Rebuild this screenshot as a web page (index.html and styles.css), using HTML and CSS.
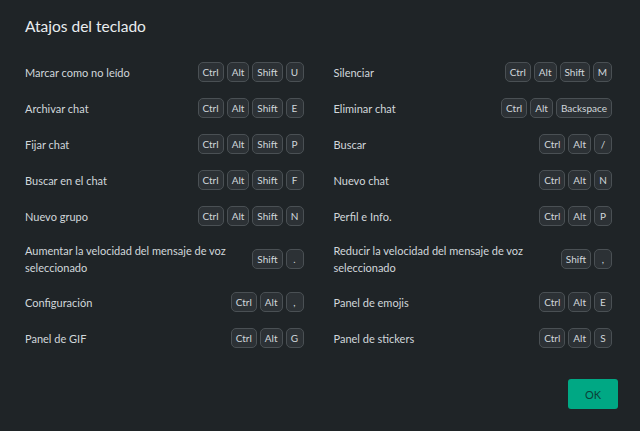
FILE: index.html
```html
<!DOCTYPE html>
<html lang="es">
<head>
  <meta charset="UTF-8">
  <meta name="viewport" content="width=device-width, initial-scale=1.0">
  <title>Atajos del teclado</title>
  <link rel="stylesheet" href="styles.css">
</head>
<body>

<div class="dialog">
  <h1 class="dialog-title">Atajos del teclado</h1>

  <div class="shortcuts">
    <div class="shortcut">
      <span class="label">Marcar como no leído</span>
      <span class="keys"><kbd>Ctrl</kbd><kbd>Alt</kbd><kbd>Shift</kbd><kbd>U</kbd></span>
    </div>
    <div class="shortcut">
      <span class="label">Silenciar</span>
      <span class="keys"><kbd>Ctrl</kbd><kbd>Alt</kbd><kbd>Shift</kbd><kbd>M</kbd></span>
    </div>
    <div class="shortcut">
      <span class="label">Archivar chat</span>
      <span class="keys"><kbd>Ctrl</kbd><kbd>Alt</kbd><kbd>Shift</kbd><kbd>E</kbd></span>
    </div>
    <div class="shortcut">
      <span class="label">Eliminar chat</span>
      <span class="keys"><kbd>Ctrl</kbd><kbd>Alt</kbd><kbd>Backspace</kbd></span>
    </div>
    <div class="shortcut">
      <span class="label">Fijar chat</span>
      <span class="keys"><kbd>Ctrl</kbd><kbd>Alt</kbd><kbd>Shift</kbd><kbd>P</kbd></span>
    </div>
    <div class="shortcut">
      <span class="label">Buscar</span>
      <span class="keys"><kbd>Ctrl</kbd><kbd>Alt</kbd><kbd>/</kbd></span>
    </div>
    <div class="shortcut">
      <span class="label">Buscar en el chat</span>
      <span class="keys"><kbd>Ctrl</kbd><kbd>Alt</kbd><kbd>Shift</kbd><kbd>F</kbd></span>
    </div>
    <div class="shortcut">
      <span class="label">Nuevo chat</span>
      <span class="keys"><kbd>Ctrl</kbd><kbd>Alt</kbd><kbd>N</kbd></span>
    </div>
    <div class="shortcut">
      <span class="label">Nuevo grupo</span>
      <span class="keys"><kbd>Ctrl</kbd><kbd>Alt</kbd><kbd>Shift</kbd><kbd>N</kbd></span>
    </div>
    <div class="shortcut">
      <span class="label">Perfil e Info.</span>
      <span class="keys"><kbd>Ctrl</kbd><kbd>Alt</kbd><kbd>P</kbd></span>
    </div>
    <div class="shortcut">
      <span class="label">Aumentar la velocidad del mensaje de voz seleccionado</span>
      <span class="keys"><kbd>Shift</kbd><kbd>.</kbd></span>
    </div>
    <div class="shortcut">
      <span class="label">Reducir la velocidad del mensaje de voz seleccionado</span>
      <span class="keys"><kbd>Shift</kbd><kbd>,</kbd></span>
    </div>
    <div class="shortcut">
      <span class="label">Configuración</span>
      <span class="keys"><kbd>Ctrl</kbd><kbd>Alt</kbd><kbd>,</kbd></span>
    </div>
    <div class="shortcut">
      <span class="label">Panel de emojis</span>
      <span class="keys"><kbd>Ctrl</kbd><kbd>Alt</kbd><kbd>E</kbd></span>
    </div>
    <div class="shortcut">
      <span class="label">Panel de GIF</span>
      <span class="keys"><kbd>Ctrl</kbd><kbd>Alt</kbd><kbd>G</kbd></span>
    </div>
    <div class="shortcut">
      <span class="label">Panel de stickers</span>
      <span class="keys"><kbd>Ctrl</kbd><kbd>Alt</kbd><kbd>S</kbd></span>
    </div>
  </div>

  <div class="dialog-footer">
    <button class="btn-ok">OK</button>
  </div>
</div>

</body>
</html>
```

FILE: styles.css
```css
/* Estilos generales */
body {
  margin: 0;
  background: #1f2427;
  font-family: Lato, "Noto Sans", sans-serif;
  color: #d1d7db;
}

/* Diálogo */
.dialog {
  padding: 14px 28px 22px 25px;
}

.dialog-title {
  margin: 0;
  font-size: 15.5px;
  font-weight: normal;
  line-height: 24px;
  color: #e9edef;
}

/* Rejilla de atajos */
.shortcuts {
  display: grid;
  grid-template-columns: 1fr 1fr;
  column-gap: 30px;
  margin-top: 16px;
}

.shortcut {
  display: flex;
  align-items: center;
  justify-content: space-between;
  gap: 12px;
  padding: 8px 0;
  min-height: 20px;
}

.label {
  font-size: 11px;
  line-height: 17px;
}

.keys {
  display: flex;
  gap: 3px;
  flex-shrink: 0;
}

kbd {
  font-family: inherit;
  font-size: 10px;
  line-height: 18px;
  padding: 0 4px;
  min-width: 8px;
  text-align: center;
  background: #2c3135;
  border: 1px solid #4a5054;
  border-radius: 5px;
  color: #d1d7db;
}

/* Pie del diálogo */
.dialog-footer {
  display: flex;
  justify-content: flex-end;
  margin-top: 23px;
  margin-right: -6px;
}

.btn-ok {
  width: 50px;
  height: 30px;
  border: none;
  border-radius: 3px;
  background: #00a884;
  color: #0b4238;
  font-family: inherit;
  font-size: 11px;
  cursor: pointer;
}
```
